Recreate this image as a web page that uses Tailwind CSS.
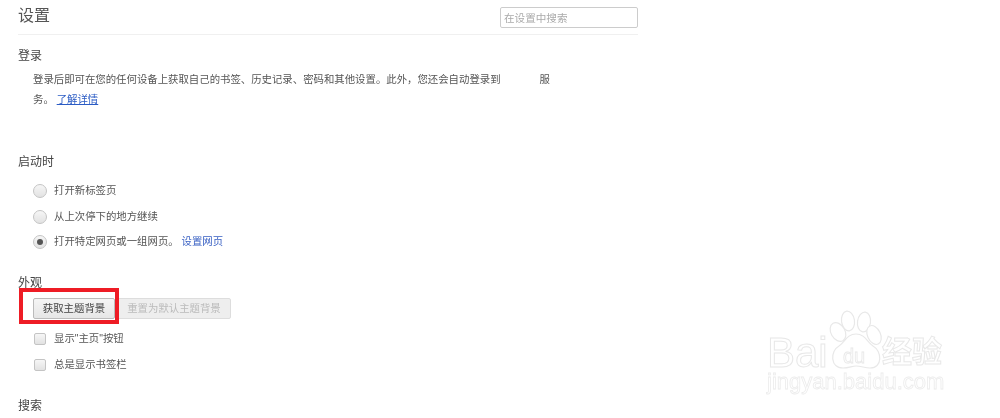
<!DOCTYPE html>
<html lang="zh-CN">
  <head>
    <meta charset="UTF-8" />
    <script src="https://cdn.jsdelivr.net/npm/@tailwindcss/browser@4"></script>
    <title>设置</title>
  </head>
  <body class="bg-white h-[418px] w-[1000px] overflow-hidden relative font-['Liberation_Sans','Noto_Sans_CJK_SC',sans-serif] text-[#444]">
    <main class="w-[620px] ml-[18px] blur-[0.5px]">
      <!-- Header -->
      <header class="h-[35px] border-b border-[#f0f0f0] flex justify-between items-start">
        <h1 class="text-[16px] leading-[20px] mt-[6px] text-[#555]">设置</h1>
        <input
          type="text"
          placeholder="在设置中搜索"
          class="w-[138px] h-[21px] mt-[7px] px-[3px] border border-[#ccc] rounded-[2px] text-[10.6px] placeholder:text-[#aaa] outline-none"
        />
      </header>

      <!-- Sign in -->
      <section class="mt-[13px]">
        <h2 class="text-[12px] leading-[16px] text-[#444]">登录</h2>
        <p class="ml-[15px] mt-[6px] w-[517px] text-[10.4px] leading-[20px] text-[#555]">
          <span class="flex justify-between"><span>登录后即可在您的任何设备上获取自己的书签、历史记录、密码和其他设置。此外，您还会自动登录到</span><span>服</span></span>
          务。 <a href="#" class="text-[#2a5bc4] underline">了解详情</a>
        </p>
      </section>

      <!-- On startup -->
      <section class="mt-[44px]">
        <h2 class="text-[12px] leading-[16px]">启动时</h2>
        <ul class="ml-[15px] mt-[13px] flex flex-col gap-[9.5px] text-[10.4px] text-[#555]">
          <li class="h-[16px] flex items-center gap-[7px]">
            <span class="size-[14px] rounded-full border border-[#c4c4c4] bg-gradient-to-b from-[#f6f6f6] to-[#e2e2e2]"></span>
            打开新标签页
          </li>
          <li class="h-[16px] flex items-center gap-[7px]">
            <span class="size-[14px] rounded-full border border-[#c4c4c4] bg-gradient-to-b from-[#f6f6f6] to-[#e2e2e2]"></span>
            从上次停下的地方继续
          </li>
          <li class="h-[16px] flex items-center gap-[7px]">
            <span class="size-[14px] rounded-full border border-[#c4c4c4] bg-gradient-to-b from-[#f6f6f6] to-[#e2e2e2] flex items-center justify-center">
              <span class="size-[6px] rounded-full bg-[#555]"></span>
            </span>
            <span>打开特定网页或一组网页。 <a href="#" class="text-[#3b62c4]">设置网页</a></span>
          </li>
        </ul>
      </section>

      <!-- Appearance -->
      <section class="mt-[25px]">
        <h2 class="text-[12px] leading-[16px]">外观</h2>
        <div class="ml-[15px] mt-[7px] flex gap-[2px] text-[10.4px]">
          <button class="w-[82px] h-[21px] border border-[#bbb] rounded-[2px] bg-gradient-to-b from-[#f5f5f5] to-[#e6e6e6] text-[#444]">获取主题背景</button>
          <button class="w-[114px] h-[21px] border border-[#ddd] rounded-[2px] bg-[#eee] text-[#bbb]">重置为默认主题背景</button>
        </div>
        <ul class="ml-[16px] mt-[12px] flex flex-col gap-[10px] text-[10.4px] text-[#555]">
          <li class="h-[16px] flex items-center gap-[8px]">
            <span class="size-[12px] rounded-[2px] border border-[#c4c4c4] bg-gradient-to-b from-[#f6f6f6] to-[#e2e2e2]"></span>
            显示"主页"按钮
          </li>
          <li class="h-[16px] flex items-center gap-[8px]">
            <span class="size-[12px] rounded-[2px] border border-[#c4c4c4] bg-gradient-to-b from-[#f6f6f6] to-[#e2e2e2]"></span>
            总是显示书签栏
          </li>
        </ul>
      </section>

      <!-- Search -->
      <section class="mt-[25px]">
        <h2 class="text-[12px] leading-[16px]">搜索</h2>
      </section>
    </main>

    <!-- Red highlight box -->
    <div class="absolute left-[19px] top-[288px] w-[100px] h-[36px] border-[4px] border-[#ee1c25]"></div>

    <!-- Watermark -->
    <div class="absolute left-[767px] top-[308px] w-[200px] h-[100px] text-white blur-[0.5px]">
      <svg class="absolute left-0 top-0" width="130" height="62" viewBox="0 0 130 62" fill="#fff" stroke="#e8e8e8" stroke-width="1.2">
        <ellipse cx="71" cy="24" rx="7" ry="10" transform="rotate(-30 71 24)" />
        <ellipse cx="81" cy="13" rx="6.5" ry="10" transform="rotate(-8 81 13)" />
        <ellipse cx="97" cy="14" rx="6.5" ry="10" transform="rotate(8 97 14)" />
        <ellipse cx="107" cy="27" rx="6.5" ry="10" transform="rotate(-25 107 27)" />
        <path d="M89 26 C 80 26 78 34 72 38 C 63 43 63 60 76 60 C 82 60 85 58 89 58 C 94 58 98 60 103 60 C 116 60 115 43 106 38 C 100 34 98 26 89 26 Z" />
      </svg>
      <span class="absolute left-0 top-[27px] text-[42px] leading-[36px] [-webkit-text-stroke:1px_#e8e8e8]">Bai</span>
      <span class="absolute left-[76px] top-[36px] text-[20px] leading-[24px] [-webkit-text-stroke:0.8px_#e8e8e8]">du</span>
      <span class="absolute left-[115px] top-[29px] text-[30px] leading-[30px] font-bold [-webkit-text-stroke:1px_#e8e8e8]">经验</span>
      <span class="absolute left-0 top-[64px] w-[190px] text-[22px] leading-[20px] [-webkit-text-stroke:0.8px_#ececec]">jingyan.baidu.com</span>
    </div>
  </body>
</html>
